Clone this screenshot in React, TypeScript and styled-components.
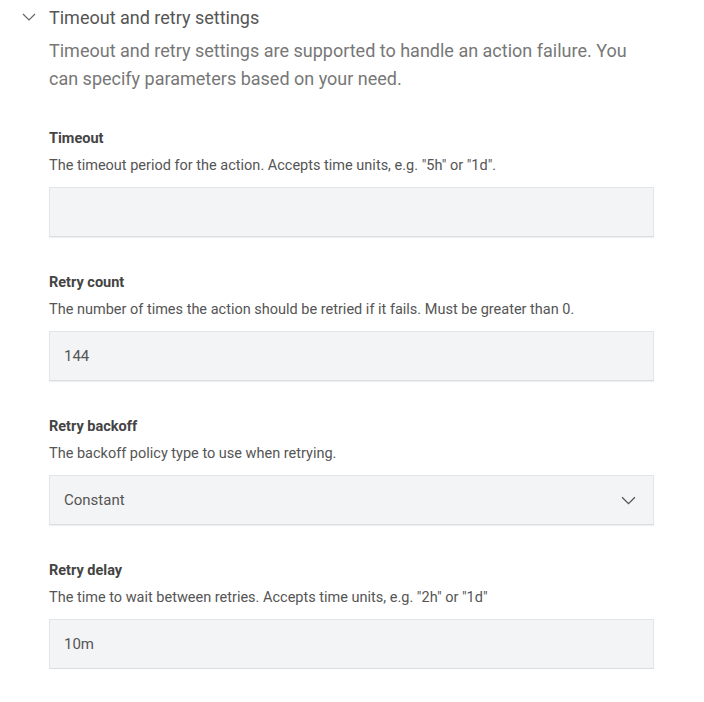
import React from "react";
import styled, { createGlobalStyle } from "styled-components";

const GlobalStyle = createGlobalStyle`
  body {
    margin: 0;
    background: #ffffff;
    font-family: "Roboto", "Noto Sans", sans-serif;
  }
`;

const Section = styled.div`
  padding: 3px 50px 0 22px;
`;

const Header = styled.div`
  display: flex;
  align-items: center;
  height: 28px;
  color: #555;
  font-size: 18px;
`;

const Chevron = styled.svg`
  width: 14px;
  height: 14px;
  flex-shrink: 0;
`;

const Body = styled.div`
  padding-left: 27px;
`;

const Intro = styled.p`
  margin: 6px 0 0;
  font-size: 18px;
  line-height: 28px;
  color: #777;
`;

const Fields = styled.div`
  display: flex;
  flex-direction: column;
  gap: 36px;
  margin-top: 36px;
`;

const Field = styled.div`
  display: flex;
  flex-direction: column;
`;

const Label = styled.div`
  font-size: 14.5px;
  font-weight: 700;
  color: #444;
  line-height: 20px;
`;

const Help = styled.div`
  margin-top: 7px;
  font-size: 14.5px;
  color: #555;
  line-height: 20px;
`;

const Box = styled.div`
  margin-top: 11px;
  height: 50px;
  box-sizing: border-box;
  display: flex;
  align-items: center;
  justify-content: space-between;
  padding: 0 17px 0 14px;
  background: #f3f4f6;
  border: 1px solid #e4e5e8;
  border-bottom-color: #dcdde0;
  box-shadow: 0 1px 1px rgba(0, 0, 0, 0.06);
  font-size: 15px;
  color: #555;
`;

const Down = ({ size, color }: { size: number; color: string }) => (
  <Chevron viewBox="0 0 14 14" style={{ width: size, height: size, marginRight: size === 14 ? 13 : 0 }}>
    <path d="M1 4 L7 10 L13 4" fill="none" stroke={color} strokeWidth="1.2" />
  </Chevron>
);

const fields = [
  {
    label: "Timeout",
    help: 'The timeout period for the action. Accepts time units, e.g. "5h" or "1d".',
    value: "",
  },
  {
    label: "Retry count",
    help: "The number of times the action should be retried if it fails. Must be greater than 0.",
    value: "144",
  },
  {
    label: "Retry backoff",
    help: "The backoff policy type to use when retrying.",
    value: "Constant",
    select: true,
  },
  {
    label: "Retry delay",
    help: 'The time to wait between retries. Accepts time units, e.g. "2h" or "1d"',
    value: "10m",
  },
];

export default function App() {
  return (
    <>
      <GlobalStyle />
      <Section>
        <Header>
          <Down size={14} color="#666" />
          Timeout and retry settings
        </Header>
        <Body>
          <Intro>
            Timeout and retry settings are supported to handle an action failure. You
            can specify parameters based on your need.
          </Intro>
          <Fields>
            {fields.map((f) => (
              <Field key={f.label}>
                <Label>{f.label}</Label>
                <Help>{f.help}</Help>
                <Box>
                  <span>{f.value}</span>
                  {f.select && <Down size={15} color="#555" />}
                </Box>
              </Field>
            ))}
          </Fields>
        </Body>
      </Section>
    </>
  );
}
